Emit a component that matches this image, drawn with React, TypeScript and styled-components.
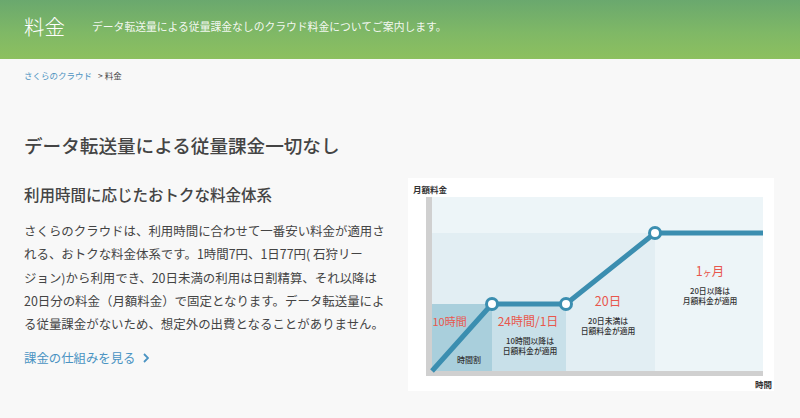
import React from "react";
import styled, { createGlobalStyle } from "styled-components";

const GlobalStyle = createGlobalStyle`
  html, body {
    margin: 0;
    padding: 0;
    background: #f8f8f8;
  }
  body {
    font-family: "Noto Sans CJK JP", "Noto Sans", sans-serif;
    color: #3c3c3c;
  }
`;

const PageHeader = styled.header`
  box-sizing: border-box;
  height: 59px;
  padding: 0 24px 7px;
  display: flex;
  align-items: center;
  gap: 27px;
  background: linear-gradient(180deg, #6aa86e 0%, #7fb866 55%, #8dc05f 100%);
  color: #fff;
`;

const PageTitle = styled.h1`
  margin: 0;
  font-size: 20.5px;
  font-weight: 300;
  line-height: 1;
`;

const PageLead = styled.p`
  margin: 0;
  font-size: 10.8px;
  color: rgba(255, 255, 255, 0.92);
`;

const Breadcrumb = styled.nav`
  padding: 10px 24px 0;
  font-size: 8.5px;
  line-height: 13px;
  color: #444;
`;

const CrumbLink = styled.a`
  color: #4d93c1;
  text-decoration: none;
  margin-right: 6px;
`;

const Main = styled.main`
  padding: 50px 24px 0;
`;

const Headline = styled.h2`
  margin: 0 0 20px;
  font-size: 18.6px;
  line-height: 26px;
  font-weight: 500;
  color: #444;
`;

const Row = styled.div`
  display: flex;
  align-items: flex-start;
  gap: 18px;
`;

const TextCol = styled.div`
  width: 366px;
  padding-top: 5px;
`;

const SubHeadline = styled.h3`
  margin: 0 0 15px;
  font-size: 15.5px;
  line-height: 22px;
  font-weight: 500;
  color: #444;
`;

const Body = styled.p`
  margin: 0;
  font-size: 12.45px;
  line-height: 23.3px;
  color: #444;
`;

const MoreLink = styled.a`
  display: inline-flex;
  align-items: center;
  gap: 7px;
  margin-top: 12px;
  font-size: 12.4px;
  line-height: 20px;
  color: #4a93c2;
  text-decoration: none;
`;

const ChartBox = styled.figure`
  margin: 0;
  width: 366px;
  height: 213px;
  background: #fff;
`;

const Chart = styled.svg`
  display: block;
  font-family: "Noto Sans CJK JP", "Noto Sans", sans-serif;
`;

const red = "#e8574d";
const ink = "#333";

const PriceChart: React.FC = () => (
  <ChartBox>
    <Chart width="366" height="213" viewBox="0 0 366 213">
      <text x="5" y="15" fontSize="8.5" fontWeight="700" fill={ink}>月額料金</text>

      <rect x="24" y="19" width="331" height="174" fill="#edf5f8" />
      <rect x="24" y="55" width="223" height="138" fill="#e2eef3" />
      <rect x="24" y="126" width="60" height="67" fill="#a9cfdc" />
      <rect x="84" y="126" width="74" height="67" fill="#c8e0e9" />

      <rect x="18" y="19" width="6" height="179" fill="#d0d0d0" />
      <rect x="18" y="193" width="337" height="5" fill="#d0d0d0" />

      <polyline
        points="24,193 84,126 158,126 247,55 355,55"
        fill="none"
        stroke="#3b8eb0"
        strokeWidth="5"
        strokeLinejoin="round"
      />
      {[
        [84, 126],
        [158, 126],
        [247, 55],
      ].map(([cx, cy]) => (
        <circle key={cx} cx={cx} cy={cy} r="5.5" fill="#fff" stroke="#3b8eb0" strokeWidth="3" />
      ))}

      <g fontWeight="400" fill={red}>
        <text x="24.5" y="148" fontSize="11">10時間</text>
        <text x="120" y="148" fontSize="12" textAnchor="middle">24時間/1日</text>
        <text x="200" y="128" fontSize="12.5" textAnchor="middle">20日</text>
        <text x="302" y="98" fontSize="12.5" textAnchor="middle">
          1<tspan fontSize="9">ヶ</tspan>月
        </text>
      </g>

      <g fontWeight="500" fill={ink} fontSize="7.8" textAnchor="middle">
        <text x="61" y="185" fontSize="8">時間割</text>
        <text x="122" y="166">10時間以降は</text>
        <text x="122" y="176">日額料金が適用</text>
        <text x="200" y="146">20日未満は</text>
        <text x="200" y="156">日額料金が適用</text>
        <text x="302" y="116">20日以降は</text>
        <text x="302" y="126">月額料金が適用</text>
      </g>

      <text x="364" y="210" fontSize="8.5" fontWeight="700" fill={ink} textAnchor="end">時間</text>
    </Chart>
  </ChartBox>
);

const Chevron = () => (
  <svg width="6" height="10" viewBox="0 0 6 10">
    <path d="M1 1l4 4-4 4" fill="none" stroke="#4a93c2" strokeWidth="1.8" />
  </svg>
);

export default function App() {
  return (
    <>
      <GlobalStyle />
      <PageHeader>
        <PageTitle>料金</PageTitle>
        <PageLead>データ転送量による従量課金なしのクラウド料金についてご案内します。</PageLead>
      </PageHeader>
      <Breadcrumb>
        <CrumbLink href="#">さくらのクラウド</CrumbLink>&gt; 料金
      </Breadcrumb>
      <Main>
        <Headline>データ転送量による従量課金一切なし</Headline>
        <Row>
          <TextCol>
            <SubHeadline>利用時間に応じたおトクな料金体系</SubHeadline>
            <Body>
              さくらのクラウドは、利用時間に合わせて一番安い料金が適用さ<br />
              れる、おトクな料金体系です。1時間7円、1日77円( 石狩リー<br />
              ジョン)から利用でき、20日未満の利用は日割精算、それ以降は<br />
              20日分の料金（月額料金）で固定となります。データ転送量によ<br />
              る従量課金がないため、想定外の出費となることがありません。
            </Body>
            <MoreLink href="#">
              課金の仕組みを見る
              <Chevron />
            </MoreLink>
          </TextCol>
          <PriceChart />
        </Row>
      </Main>
    </>
  );
}
